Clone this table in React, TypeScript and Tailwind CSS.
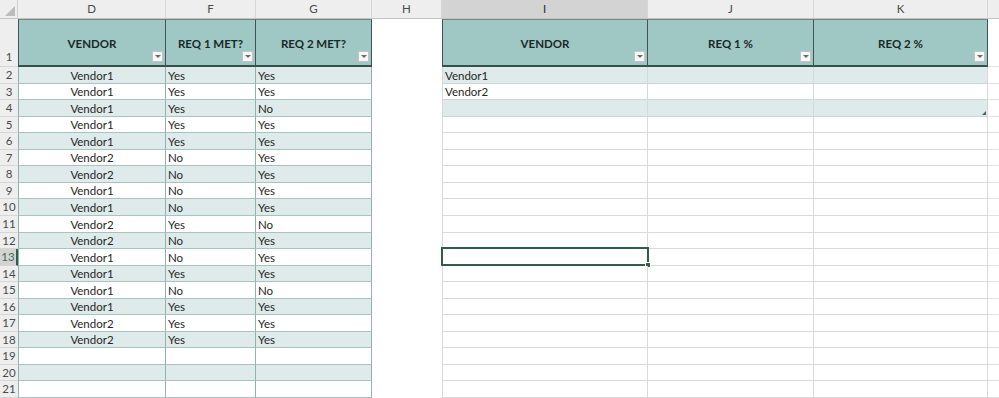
import React from "react";

type Row = { n: number; vendor: string; r1: string; r2: string };

const leftRows: Row[] = [
  { n: 2, vendor: "Vendor1", r1: "Yes", r2: "Yes" },
  { n: 3, vendor: "Vendor1", r1: "Yes", r2: "Yes" },
  { n: 4, vendor: "Vendor1", r1: "Yes", r2: "No" },
  { n: 5, vendor: "Vendor1", r1: "Yes", r2: "Yes" },
  { n: 6, vendor: "Vendor1", r1: "Yes", r2: "Yes" },
  { n: 7, vendor: "Vendor2", r1: "No", r2: "Yes" },
  { n: 8, vendor: "Vendor2", r1: "No", r2: "Yes" },
  { n: 9, vendor: "Vendor1", r1: "No", r2: "Yes" },
  { n: 10, vendor: "Vendor1", r1: "No", r2: "Yes" },
  { n: 11, vendor: "Vendor2", r1: "Yes", r2: "No" },
  { n: 12, vendor: "Vendor2", r1: "No", r2: "Yes" },
  { n: 13, vendor: "Vendor1", r1: "No", r2: "Yes" },
  { n: 14, vendor: "Vendor1", r1: "Yes", r2: "Yes" },
  { n: 15, vendor: "Vendor1", r1: "No", r2: "No" },
  { n: 16, vendor: "Vendor1", r1: "Yes", r2: "Yes" },
  { n: 17, vendor: "Vendor2", r1: "Yes", r2: "Yes" },
  { n: 18, vendor: "Vendor2", r1: "Yes", r2: "Yes" },
  { n: 19, vendor: "", r1: "", r2: "" },
  { n: 20, vendor: "", r1: "", r2: "" },
  { n: 21, vendor: "", r1: "", r2: "" },
];

const summary: Record<number, string> = { 2: "Vendor1", 3: "Vendor2", 4: "" };

// Row bottoms follow a 16.55px pitch starting under the header row.
const rowHeight = (n: number) =>
  Math.round(67 + 16.55 * (n - 1)) - Math.round(67 + 16.55 * (n - 2));

function FilterButton() {
  return (
    <div className="absolute right-[2px] bottom-[3px] w-[11px] h-[11px] bg-[#f7f7f7] border border-[#c4c4c4] flex items-center justify-center">
      <div className="w-0 h-0 border-l-[3px] border-r-[3px] border-t-[3px] border-l-transparent border-r-transparent border-t-[#6a6a6a]" />
    </div>
  );
}

function HeaderCell({ w, label, first }: { w: string; label: string; first?: boolean }) {
  return (
    <div
      className={`${w} shrink-0 relative flex items-center justify-center pt-[2px] bg-[#9fc8c4] border-t border-r border-b-2 border-t-[#6b8986] border-r-[#3f5553] border-b-[#3a4e4c] ${
        first ? "border-l border-l-[#3f5553]" : ""
      } font-bold text-[11.5px] text-[#1c2928]`}
    >
      {label}
      <FilterButton />
    </div>
  );
}

function ColHead({ w, label, active }: { w: string; label: string; active?: boolean }) {
  return (
    <div
      className={`${w} shrink-0 flex items-center justify-center border-r border-b border-r-[#d6d6d6] border-b-[#c4c4c4] text-[11.5px] ${
        active ? "bg-[#d3d3d3] text-[#2c2c2c]" : "bg-[#eeeeee] text-[#4a4a4a]"
      }`}
    >
      {label}
    </div>
  );
}

export default function App() {
  return (
    <div className="w-[999px] h-[398px] overflow-hidden bg-white font-['Lato',sans-serif] text-[11.5px] text-[#262626]">
      {/* column letters */}
      <div className="flex h-[19px]">
        <div className="w-[18px] shrink-0 relative bg-[#eeeeee] border-r border-b border-r-[#d0d0d0] border-b-[#c4c4c4]">
          <div className="absolute right-[2px] bottom-[2px] w-0 h-0 border-l-[10px] border-b-[10px] border-l-transparent border-b-[#bdbdbd]" />
        </div>
        <ColHead w="w-[148px]" label="D" />
        <ColHead w="w-[90px]" label="F" />
        <ColHead w="w-[116px]" label="G" />
        <ColHead w="w-[70px]" label="H" />
        <ColHead w="w-[206px]" label="I" active />
        <ColHead w="w-[166px]" label="J" />
        <ColHead w="w-[174px]" label="K" />
        <div className="flex-1 bg-[#eeeeee] border-b border-b-[#c4c4c4]" />
      </div>

      {/* row 1: table headers */}
      <div className="flex h-[48px]">
        <div className="w-[18px] shrink-0 bg-[#eeeeee] border-b border-b-[#d6d6d6] flex items-end justify-center pb-[1px] text-[11.5px] text-[#4a4a4a]">
          1
        </div>
        <HeaderCell w="w-[148px]" label="VENDOR" first />
        <HeaderCell w="w-[90px]" label="REQ 1 MET?" />
        <HeaderCell w="w-[116px]" label="REQ 2 MET?" />
        <div className="w-[70px] shrink-0 bg-white" />
        <HeaderCell w="w-[206px]" label="VENDOR" first />
        <HeaderCell w="w-[166px]" label="REQ 1 %" />
        <HeaderCell w="w-[174px]" label="REQ 2 %" />
        <div className="flex-1 border-b border-b-[#e2e2e2]" />
      </div>

      {leftRows.map((r) => {
        const h = rowHeight(r.n) === 17 ? "h-[17px]" : "h-[16px]";
        const band = r.n % 2 === 0;
        const leftBg = band ? "bg-[#deebea]" : "bg-white";
        const inSummary = r.n <= 4;
        const selected = r.n === 13;
        const rightCell = inSummary
          ? `${band ? "bg-[#deebea]" : "bg-white"} border-r border-b border-r-[#d2d9d8] border-b-[#c9d8d6]`
          : "bg-white border-r border-b border-r-[#dadada] border-b-[#dadada]";
        return (
          <div key={r.n} className={`flex ${h}`}>
            <div
              className={`w-[18px] shrink-0 flex items-center justify-center border-b border-b-[#d6d6d6] text-[11.5px] ${
                selected
                  ? "bg-[#d3d3d3] text-[#3b6e55] border-r-2 border-r-[#2f6149]"
                  : "bg-[#eeeeee] text-[#4a4a4a]"
              }`}
            >
              {r.n}
            </div>
            <div
              className={`w-[148px] shrink-0 flex items-center justify-center pt-[1px] ${leftBg} border-l border-r border-b border-l-[#8fb3af] border-r-[#8fb3af] border-b-[#a7c4c1]`}
            >
              {r.vendor}
            </div>
            <div
              className={`w-[90px] shrink-0 flex items-center pl-[2px] pt-[1px] ${leftBg} border-r border-b border-r-[#8fb3af] border-b-[#a7c4c1]`}
            >
              {r.r1}
            </div>
            <div
              className={`w-[116px] shrink-0 flex items-center pl-[2px] pt-[1px] ${leftBg} border-r border-b border-r-[#8fb3af] border-b-[#a7c4c1]`}
            >
              {r.r2}
            </div>
            <div className="w-[70px] shrink-0 bg-white" />
            <div
              className={`w-[206px] shrink-0 relative flex items-center pl-[2px] pt-[1px] border-l ${
                inSummary ? "border-l-[#d2d9d8]" : "border-l-[#dadada]"
              } ${rightCell}`}
            >
              {inSummary ? summary[r.n] : ""}
              {selected && (
                <div className="absolute -left-[2px] -top-[2px] -right-[2px] -bottom-[1px] border-2 border-[#2f5d48]">
                  <div className="absolute -right-[4px] -bottom-[4px] w-[6px] h-[6px] bg-[#2f5d48] border border-white" />
                </div>
              )}
            </div>
            <div className={`w-[166px] shrink-0 ${rightCell}`} />
            <div className={`w-[174px] shrink-0 relative ${rightCell}`}>
              {r.n === 4 && (
                <div className="absolute right-[1px] bottom-[1px] w-0 h-0 border-l-[4px] border-b-[4px] border-l-transparent border-b-[#4f605e]" />
              )}
            </div>
            <div className="flex-1 border-b border-b-[#e2e2e2]" />
          </div>
        );
      })}
    </div>
  );
}
